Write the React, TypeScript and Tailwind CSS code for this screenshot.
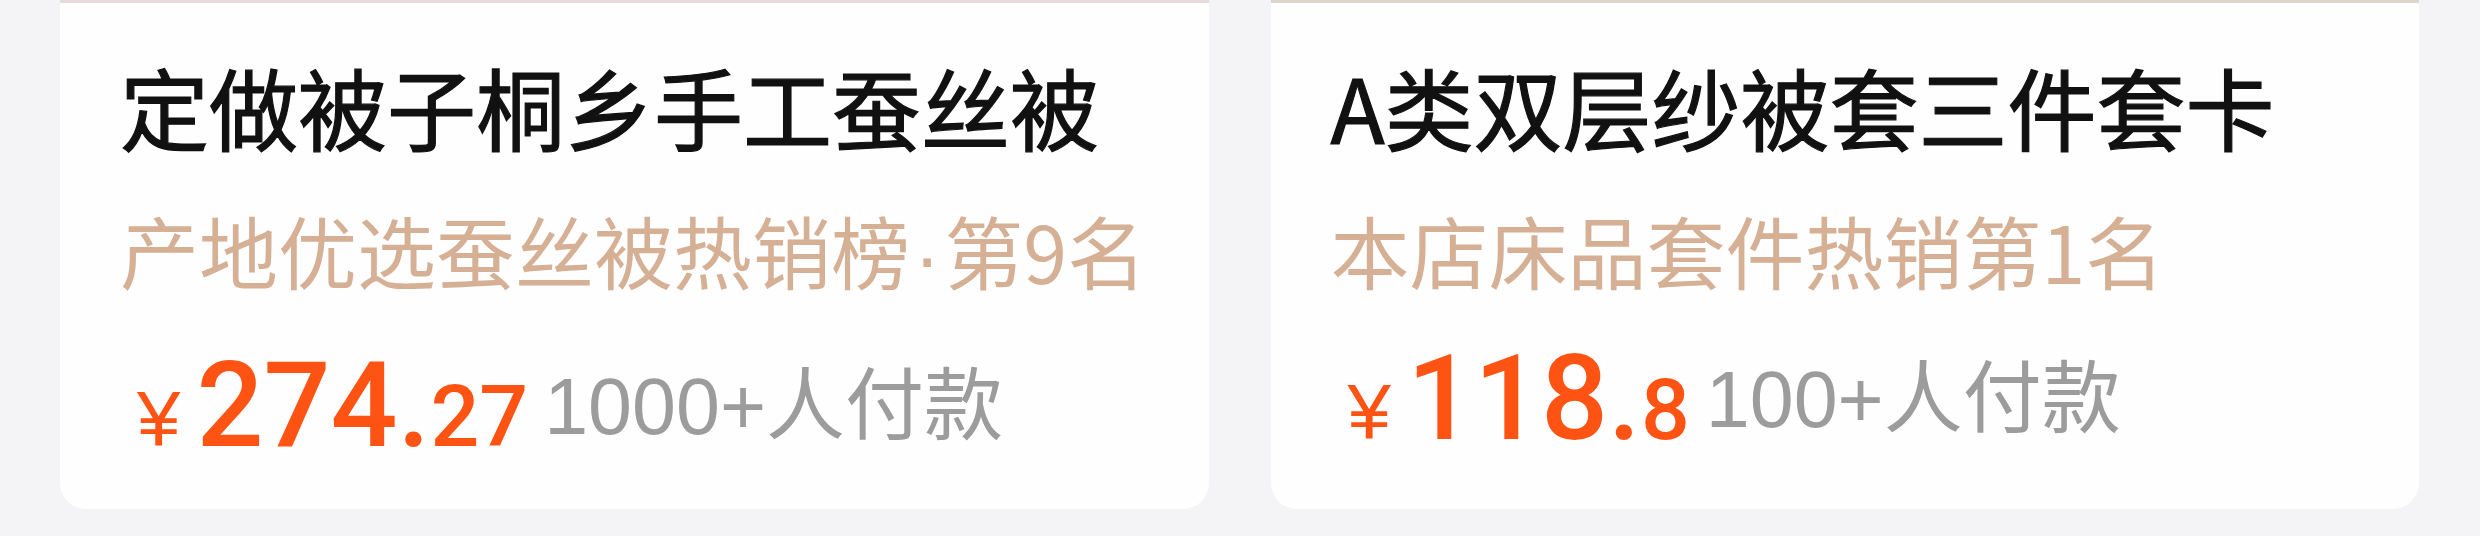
const products = [
  {
    title: "定做被子桐乡手工蚕丝被",
    tag: ["产地优选蚕丝被热销榜", "第9名"],
    yuan: "274",
    cents: "27",
    sales: "1000+人付款",
    strip: "bg-[#e7dadb]",
  },
  {
    title: "A类双层纱被套三件套卡",
    tag: ["本店床品套件热销第1名"],
    yuan: "118",
    cents: "8",
    sales: "100+人付款",
    strip: "bg-[#ddd5cc]",
  },
];

const cjk = "font-['Noto_Sans_CJK_SC',sans-serif]";
const latin = "font-['Liberation_Sans','Noto_Sans_CJK_SC',sans-serif]";
const digits = "font-['Roboto','Liberation_Sans',sans-serif]";

const ProductCard = ({ p }: { p: (typeof products)[number] }) => {
  return (
    <div className="flex-1 h-[509px] bg-[#fefefe] rounded-b-[26px] overflow-hidden flex flex-col">
      {/* bottom edge of the product photo */}
      <div className={`h-[3px] ${p.strip}`}></div>

      <div className="px-[60px] pt-[58px] flex flex-col">
        <div className={`${cjk} text-[89px] leading-[89px] font-normal text-[#111111] whitespace-nowrap [-webkit-text-stroke:1.2px_#111111]`}>
          {p.title}
        </div>

        <div className={`${cjk} mt-[60px] text-[79px] leading-[79px] text-[#d6b095] whitespace-nowrap`}>
          {p.tag[0]}
          {p.tag.length > 1 && (
            <>
              <span className="font-['Liberation_Sans',sans-serif] mx-[4px]">·</span>
              {p.tag[1]}
            </>
          )}
        </div>

        <div className="mt-[51px] flex items-end whitespace-nowrap">
          <div className={`${digits} flex items-baseline text-[#ff5314] leading-none`}>
            <span className={`${latin} ml-[17px] mr-[16px] text-[78px] font-normal`}>¥</span>
            <span className="text-[118px] font-medium">{p.yuan}.</span>
            <span className="text-[86px] font-medium">{p.cents}</span>
          </div>
          <span className={`${latin} ml-[16px] mb-[19px] text-[79px] leading-none text-[#9c9c9c]`}>
            {p.sales}
          </span>
        </div>
      </div>
    </div>
  );
};

export default function App() {
  return (
    <div className="w-[2480px] h-[536px] bg-[#f4f4f6] flex gap-[62px] pl-[60px] pr-[61px] overflow-hidden">
      {products.map((p) => (
        <ProductCard key={p.title} p={p} />
      ))}
    </div>
  );
}
